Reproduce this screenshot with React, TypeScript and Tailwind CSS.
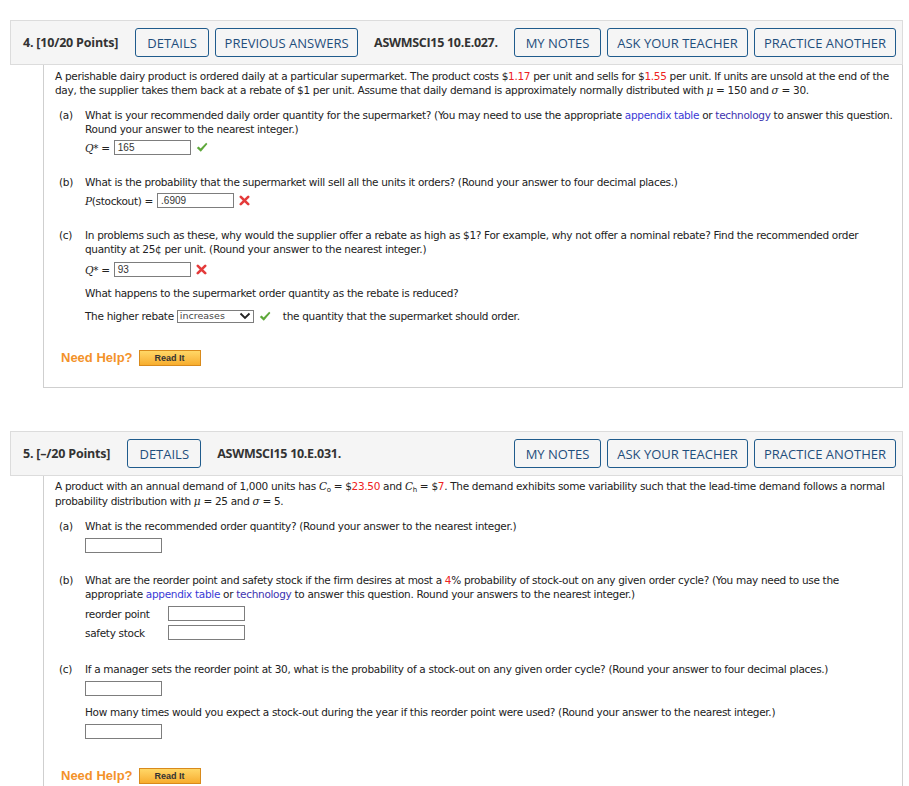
import React from "react";

const Check = () => (
  <svg width="12" height="11" viewBox="0 0 12 11" className="shrink-0">
    <path d="M0.8 6 L2.6 4.4 L4.6 6.4 L10.2 0.8 L11.4 2 L4.8 9.8 Z" fill="#5ea83a" />
  </svg>
);

const Cross = () => (
  <svg width="11" height="11" viewBox="0 0 11 11" className="shrink-0">
    <path d="M1.8 1.8 L9.2 9.2 M9.2 1.8 L1.8 9.2" stroke="#e43b3b" strokeWidth="2.6" strokeLinecap="round" />
  </svg>
);

const Btn = ({ children, w }: { children: React.ReactNode; w: string }) => (
  <div className={`${w} h-[29px] flex items-center justify-center border border-[#1f5b8c] rounded-[3px] text-[13px] tracking-normal text-[#1f4e7c] font-['Open_Sans',sans-serif] whitespace-nowrap bg-[#f5f5f5]`}>
    {children}
  </div>
);

const Input = ({ value }: { value?: string }) => (
  <div className="w-[77px] h-[15px] border border-[#7d7d7d] bg-white flex items-center pl-[3px] text-[10px] tracking-normal text-[#333] font-['Liberation_Sans',Arial,sans-serif] leading-none">
    {value}
  </div>
);

const ReadIt = () => (
  <div className="w-[62px] h-[16px] border border-[#d88a1c] bg-gradient-to-b from-[#ffd766] to-[#f7ad2c] flex items-center justify-center text-[9px] tracking-normal font-bold text-[#333] font-['Liberation_Sans',Arial,sans-serif]">
    Read It
  </div>
);

const NeedHelp = () => (
  <div className="flex items-center gap-[6px]">
    <span className="text-[13px] tracking-normal font-bold text-[#f3922a] font-['Liberation_Sans',Arial,sans-serif]">Need Help?</span>
    <ReadIt />
  </div>
);

const Header = ({ label, extra, q }: { label: string; extra: React.ReactNode; q: string }) => (
  <div className="h-[45px] flex items-center border border-[#dcdcdc] bg-[#f5f5f5] pl-[12px] pr-[6px] font-['Open_Sans',sans-serif]">
    <span className="text-[12.5px] tracking-[-0.2px] font-bold text-[#333] whitespace-nowrap">{label}</span>
    <div className="flex gap-[6px] ml-[17px]">{extra}</div>
    <span className="ml-[16px] text-[12.5px] tracking-[-0.3px] font-bold text-[#333] whitespace-nowrap">{q}</span>
    <div className="ml-auto flex gap-[6px]">
      <Btn w="w-[87px]">MY NOTES</Btn>
      <Btn w="w-[141px]">ASK YOUR TEACHER</Btn>
      <Btn w="w-[142px]">PRACTICE ANOTHER</Btn>
    </div>
  </div>
);

const R = ({ children }: { children: React.ReactNode }) => <span className="text-[#ee2222]">{children}</span>;
const I = ({ children }: { children: React.ReactNode }) => <span className="italic font-['DejaVu_Serif',serif]">{children}</span>;
const A1 = () => <span className="text-[#3a3ad6]">appendix table</span>;
const A2 = () => <span className="text-[#3d33b0]">technology</span>;

const Part = ({ l, children }: { l: string; children: React.ReactNode }) => (
  <div className="flex ml-[4px]">
    <div className="w-[26px] shrink-0">{l}</div>
    <div className="flex-1">{children}</div>
  </div>
);

export default function App() {
  return (
    <div className="min-h-[786px] bg-white pt-[20px] pl-[10px] pr-[6px] font-['DejaVu_Sans',Verdana,sans-serif] text-[10.5px] leading-[14px] text-[#222] tracking-[-0.31px]">
      <Header
        label="4.  [10/20 Points]"
        extra={
          <>
            <Btn w="w-[74px]">DETAILS</Btn>
            <Btn w="w-[143px]">PREVIOUS ANSWERS</Btn>
          </>
        }
        q="ASWMSCI15 10.E.027."
      />
      <div className="ml-[33px] border-x border-b border-[#cfcfcf] pl-[11px] pt-[4px] pb-[21px]">
        <div className="whitespace-nowrap">
          A perishable dairy product is ordered daily at a particular supermarket. The product costs $<R>1.17</R> per unit and sells for $<R>1.55</R> per unit. If units are unsold at the end of the
          <br />
          day, the supplier takes them back at a rebate of $1 per unit. Assume that daily demand is approximately normally distributed with <I>μ</I> = 150 and <I>σ</I> = 30.
        </div>
        <div className="mt-[11px]">
          <Part l="(a)">
            <div className="whitespace-nowrap">
              What is your recommended daily order quantity for the supermarket? (You may need to use the appropriate <A1 /> or <A2 /> to answer this question.
              <br />
              Round your answer to the nearest integer.)
            </div>
            <div className="mt-[4px] flex items-center h-[15px]">
              <span><I>Q</I>* =&nbsp;</span>
              <span className="ml-[1px]"><Input value="165" /></span>
              <span className="ml-[5px]"><Check /></span>
            </div>
          </Part>
        </div>
        <div className="mt-[20px]">
          <Part l="(b)">
            <div className="whitespace-nowrap">What is the probability that the supermarket will sell all the units it orders? (Round your answer to four decimal places.)</div>
            <div className="mt-[4px] flex items-center h-[15px]">
              <span><I>P</I>(stockout) =&nbsp;</span>
              <span className="ml-[1px]"><Input value=".6909" /></span>
              <span className="ml-[5px]"><Cross /></span>
            </div>
          </Part>
        </div>
        <div className="mt-[20px]">
          <Part l="(c)">
            <div className="whitespace-nowrap">
              In problems such as these, why would the supplier offer a rebate as high as $1? For example, why not offer a nominal rebate? Find the recommended order
              <br />
              quantity at 25¢ per unit. (Round your answer to the nearest integer.)
            </div>
            <div className="mt-[6px] flex items-center h-[15px]">
              <span><I>Q</I>* =&nbsp;</span>
              <span className="ml-[1px]"><Input value="93" /></span>
              <span className="ml-[5px]"><Cross /></span>
            </div>
            <div className="mt-[9px]">What happens to the supermarket order quantity as the rebate is reduced?</div>
            <div className="mt-[9px] flex items-center h-[14px]">
              <span>The higher rebate&nbsp;</span>
              <div className="w-[77px] h-[13px] border border-[#7d7d7d] flex items-center justify-between px-[2px] text-[9.5px] tracking-normal text-[#444] font-['DejaVu_Sans',sans-serif] leading-none">
                <span>increases</span>
                <svg width="12" height="8" viewBox="0 0 12 8"><path d="M1.5 1.5 L6 6 L10.5 1.5" stroke="#222" strokeWidth="1.8" fill="none" /></svg>
              </div>
              <span className="ml-[5px]"><Check /></span>
              <span className="ml-[12px]">the quantity that the supermarket should order.</span>
            </div>
          </Part>
        </div>
        <div className="mt-[27px] ml-[6px]">
          <NeedHelp />
        </div>
      </div>

      <div className="h-[43px]" />

      <Header label="5.  [–/20 Points]" extra={<Btn w="w-[74px]">DETAILS</Btn>} q="ASWMSCI15 10.E.031." />
      <div className="ml-[33px] border-x border-[#cfcfcf] pl-[11px] pt-[3px] pb-[4px]">
        <div className="whitespace-nowrap leading-[15px]">
          A product with an annual demand of 1,000 units has <I>C</I><sub className="text-[7px]">o</sub> = $<R>23.50</R> and <I>C</I><sub className="text-[7px]">h</sub> = $<R>7</R>. The demand exhibits some variability such that the lead-time demand follows a normal
          <br />
          probability distribution with <I>μ</I> = 25 and <I>σ</I> = 5.
        </div>
        <div className="mt-[10px]">
          <Part l="(a)">
            <div>What is the recommended order quantity? (Round your answer to the nearest integer.)</div>
            <div className="mt-[5px]"><Input /></div>
          </Part>
        </div>
        <div className="mt-[20px]">
          <Part l="(b)">
            <div className="whitespace-nowrap">
              What are the reorder point and safety stock if the firm desires at most a <R>4</R>% probability of stock-out on any given order cycle? (You may need to use the
              <br />
              appropriate <A1 /> or <A2 /> to answer this question. Round your answers to the nearest integer.)
            </div>
            <div className="mt-[5px] flex items-center h-[15px]">
              <span className="w-[83px]">reorder point</span>
              <Input />
            </div>
            <div className="mt-[4px] flex items-center h-[15px]">
              <span className="w-[83px]">safety stock</span>
              <Input />
            </div>
          </Part>
        </div>
        <div className="mt-[22px]">
          <Part l="(c)">
            <div>If a manager sets the reorder point at 30, what is the probability of a stock-out on any given order cycle? (Round your answer to four decimal places.)</div>
            <div className="mt-[5px]"><Input /></div>
            <div className="mt-[9px]">How many times would you expect a stock-out during the year if this reorder point were used? (Round your answer to the nearest integer.)</div>
            <div className="mt-[5px]"><Input /></div>
          </Part>
        </div>
        <div className="mt-[29px] ml-[6px]">
          <NeedHelp />
        </div>
      </div>
    </div>
  );
}
